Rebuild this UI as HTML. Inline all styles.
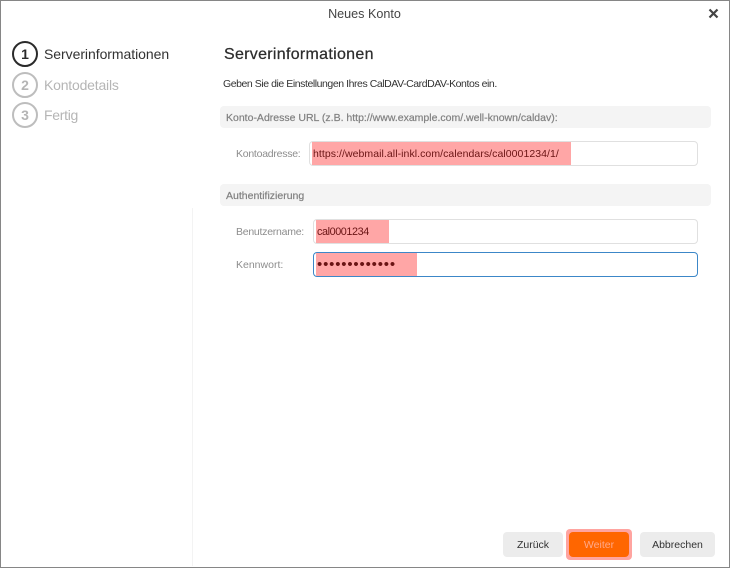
<!DOCTYPE html>
<html><head><meta charset="utf-8"><style>
html,body{margin:0;padding:0;width:730px;height:568px;overflow:hidden;background:#fff}
body{font-family:"Liberation Sans",sans-serif;position:relative}
.a{position:absolute;white-space:nowrap;box-sizing:border-box}
.win{left:0;top:0;width:730px;height:568px;border:1px solid #868686}
.c{width:26px;height:26px;left:12px;border:2px solid #bdbdbd;border-radius:50%;color:#b5b5b5;font-weight:bold;font-size:14px;line-height:22px;text-align:center}
.s{left:44px;font-size:14px;line-height:18px;color:#b5b5b5}
.sec{left:220px;width:491px;height:22px;background:#f4f4f4;border-radius:4px;font-size:10.5px;line-height:25px;color:#808080;padding-left:6px;-webkit-text-stroke:.2px #808080}
.lb{font-size:10.5px;line-height:14px;color:#8d8d8d}
.inp{border:1px solid #e0e0e0;border-radius:4px;background:#fff}
.hl{background:#ffa6a6;color:#6a1414;font-size:10.5px}
.btn{top:532px;height:25px;border-radius:4px;background:#ececec;color:#333;font-size:10.5px;line-height:27px;text-align:center}
</style></head><body>
<div class="a win"></div>
<div class="a" style="left:0;width:729px;top:6px;text-align:center;font-size:12.6px;line-height:17px;color:#444">Neues Konto</div>
<svg class="a" style="left:708px;top:8px" width="11" height="11" viewBox="0 0 11 11"><path d="M1.5 1.5L9.5 9.5M9.5 1.5L1.5 9.5" stroke="#444" stroke-width="2.2" fill="none"/></svg>

<div class="a c" style="top:41px;border-color:#2a2a2a;color:#2a2a2a">1</div>
<div class="a s" style="top:45px;color:#333;letter-spacing:-.05px">Serverinformationen</div>
<div class="a c" style="top:72px">2</div>
<div class="a s" style="top:76px;letter-spacing:-.2px">Kontodetails</div>
<div class="a c" style="top:102px">3</div>
<div class="a s" style="top:106px;letter-spacing:-.3px">Fertig</div>

<div class="a" style="left:192px;top:208px;width:1px;height:358px;background:#f3f3f3"></div>

<div class="a" style="left:224px;top:45px;font-size:16px;line-height:20px;color:#2d2d2d;letter-spacing:.3px;-webkit-text-stroke:.25px #2d2d2d">Serverinformationen</div>
<div class="a" style="left:223px;top:77px;font-size:10.5px;line-height:14px;color:#333;letter-spacing:-.44px">Geben Sie die Einstellungen Ihres CalDAV-CardDAV-Kontos ein.</div>

<div class="a sec" style="top:106px">Konto-Adresse URL (z.B. http://www.example.com/.well-known/caldav):</div>
<div class="a lb" style="left:236px;top:147px;letter-spacing:-.25px">Kontoadresse:</div>
<div class="a inp" style="left:309px;top:141px;width:389px;height:25px"></div>
<div class="a hl" style="left:312px;top:142px;width:259px;height:23px;line-height:24px;padding-left:1px;letter-spacing:.06px">https://webmail.all-inkl.com/calendars/cal0001234/1/</div>

<div class="a sec" style="top:184px">Authentifizierung</div>
<div class="a lb" style="left:236px;top:225px;letter-spacing:-.25px">Benutzername:</div>
<div class="a inp" style="left:313px;top:219px;width:385px;height:25px"></div>
<div class="a hl" style="left:316px;top:220px;width:73px;height:23px;line-height:24px;padding-left:1px;letter-spacing:-.4px;font-size:10.8px">cal0001234</div>
<div class="a lb" style="left:236px;top:258px">Kennwort:</div>
<div class="a inp" style="left:313px;top:252px;width:385px;height:25px;border-color:#3c87c8"></div>
<div class="a hl" style="left:316px;top:253px;width:101px;height:23px;line-height:23px;padding-left:1px;font-size:15px;letter-spacing:.82px">•••••••••••••</div>

<div class="a btn" style="left:503px;width:60px">Zurück</div>
<div class="a" style="left:566px;top:529px;width:66px;height:31px;background:#ffa4a0;border-radius:4px"></div>
<div class="a btn" style="left:569px;width:60px;background:#ff6600;color:#ffa98a">Weiter</div>
<div class="a btn" style="left:640px;width:75px">Abbrechen</div>
</body></html>
